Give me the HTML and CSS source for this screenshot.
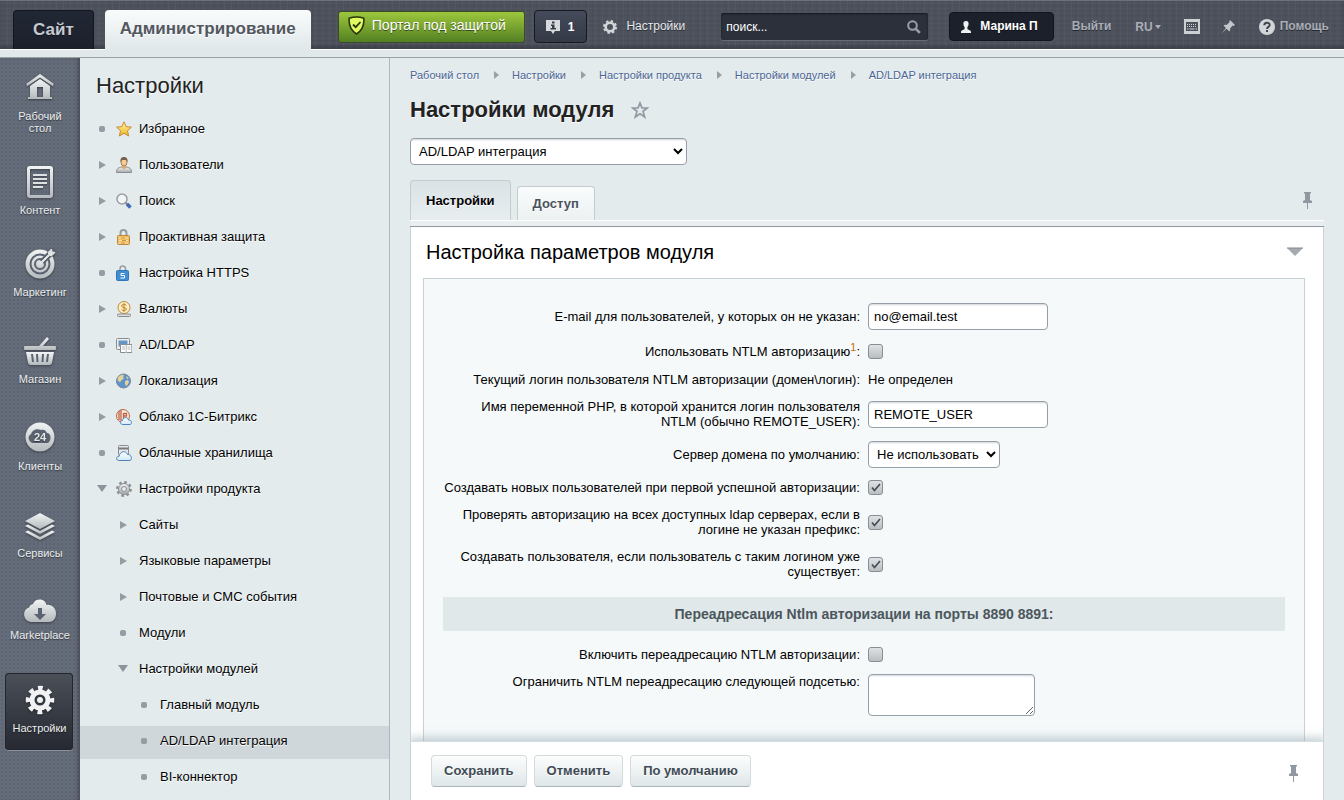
FILE: index.html
```
<!DOCTYPE html>
<html lang="ru">
<head>
    <meta charset="utf-8">
    <title>Настройки модуля</title>
    <link rel="stylesheet" href="styles.css">
</head>
<body>
    <!-- общие градиенты для иконок -->
    <svg class="defs" width="0" height="0" aria-hidden="true">
        <defs>
            <linearGradient id="metal" x1="0" y1="0" x2="0" y2="1">
                <stop offset="0" stop-color="#f1f4f4"/><stop offset="1" stop-color="#b4babd"/>
            </linearGradient>
            <linearGradient id="gold" x1="0" y1="0" x2="0" y2="1">
                <stop offset="0" stop-color="#fff3a0"/><stop offset="1" stop-color="#f0b820"/>
            </linearGradient>
            <linearGradient id="gray" x1="0" y1="0" x2="0" y2="1">
                <stop offset="0" stop-color="#f2f2f2"/><stop offset="1" stop-color="#a5a8aa"/>
            </linearGradient>
            <linearGradient id="sky" x1="0" y1="0" x2="0" y2="1">
                <stop offset="0" stop-color="#ffffff"/><stop offset="1" stop-color="#d3e8f8"/>
            </linearGradient>
        </defs>
    </svg>

    <header class="header">
        <nav class="header-tabs">
            <a href="#" class="header-tab header-tab-site">Сайт</a>
            <a href="#" class="header-tab header-tab-admin">Администрирование</a>
        </nav>
        <a href="#" class="protect">
            <svg width="17" height="19" viewBox="0 0 17 19"><path d="M8.500 1C6 1 3.500 1.400 1.200 2.200C.6 9 2.800 14.500 8.500 18C14.200 14.500 16.400 9 15.800 2.200C13.500 1.400 11 1 8.500 1Z" fill="#e2fa62" stroke="#27370c" stroke-width="1.600"/><path d="M5 8.500l2.700 2.700L12.500 6" fill="none" stroke="#27370c" stroke-width="1.800"/></svg>
            Портал под защитой
        </a>
        <button type="button" class="notify">
            <svg width="14" height="15" viewBox="0 0 14 15"><path d="M0 1h14v11H9l-2 3-2-3H0z" fill="#d6dadd"/><path d="M6 2.500h2.500v2H6zM5 5.500h3.500V9H10v1.500H4.500V9H6V7H5z" fill="#363c4a"/></svg>
            1
        </button>
        <a href="#" class="header-settings">
            <svg width="14" height="14" viewBox="0 0 14 14"><circle cx="7" cy="7" r="4.300" fill="none" stroke="#d3d6d9" stroke-width="2.600"/><circle cx="7" cy="7" r="6" fill="none" stroke="#d3d6d9" stroke-width="2" stroke-dasharray="2.400 2.310"/></svg>
            Настройки
        </a>
        <form class="search">
            <input type="text" class="search-input" value="поиск..." aria-label="Поиск">
            <button type="button" class="search-button" aria-label="Найти">
                <svg width="14" height="14" viewBox="0 0 14 14"><circle cx="5.500" cy="5.500" r="4.300" fill="none" stroke="#9a9fa7" stroke-width="2"/><path d="M8.800 8.800l4 4" stroke="#9a9fa7" stroke-width="2.600"/></svg>
            </button>
        </form>
        <div class="header-right">
            <a href="#" class="user">
                <svg width="10" height="12" viewBox="0 0 10 12"><path d="M5 0C3 0 2.300 1.200 2.400 3c.1 1.500.7 2.500 1.200 3v1.700c-.2.900-.8 1-1.800 1.300C.3 9.500 0 10 0 12h10c0-2-.3-2.500-1.800-3-1-.3-1.600-.4-1.800-1.300V6c.5-.5 1.100-1.500 1.200-3C7.700 1.200 7 0 5 0z" fill="#eef1f2"/></svg>
                Марина П
            </a>
            <a href="#" class="header-link">Выйти</a>
            <button type="button" class="lang">RU <span class="lang-arrow"></span></button>
            <button type="button" class="icon-button" aria-label="Клавиатура">
                <svg width="16" height="15" viewBox="0 0 16 15"><path fill-rule="evenodd" d="M0 0h16v15H0zM2 3v9h12V3z" fill="#cdd1d4"/><path d="M3 5.500h10M3 7.500h10" stroke="#cdd1d4" stroke-dasharray="1 1"/><path d="M3 10h1.500M5.500 10h5M11.500 10H13" stroke="#cdd1d4"/></svg>
            </button>
            <button type="button" class="icon-button" aria-label="Закрепить">
                <svg width="14" height="14" viewBox="0 0 14 14"><path d="M9 0l5 5-1.500.9-.8-.3-2.700 2.900c.3 1.200.1 2.200-.6 3L5.500 8.700.3 13.800 5 8 2.500 5.500c.8-.7 2-.9 3.100-.5L8.500 2.300 8.200 1.400z" fill="#c3c7cb"/></svg>
            </button>
            <a href="#" class="header-link help">
                <svg width="16" height="16" viewBox="0 0 16 16"><circle cx="8" cy="8" r="8" fill="#d3d6d9"/><path d="M5.300 6.200C5.300 2.800 10.700 2.900 10.700 6C10.700 7.800 8 8 8 10" fill="none" stroke="#424752" stroke-width="2"/><path d="M7 11h2v2H7z" fill="#424752"/></svg>
                Помощь
            </a>
        </div>
    </header>
    <div class="header-strip"></div>

    <div class="page">
        <nav class="rail">
            <a href="#" class="rail-item">
                <svg width="32" height="32" viewBox="0 0 32 32"><g fill="url(#metal)"><path d="M16 2L2 12l1.500 2L16 5.500 28.500 14l1.500-2z"/><path fill-rule="evenodd" d="M16 7L6 14v11H4v2h24v-2h-2V14zM13 15h6v10h-6z"/></g></svg>
                Рабочий стол
            </a>
            <a href="#" class="rail-item">
                <svg width="32" height="32" viewBox="0 0 32 32"><path fill="url(#metal)" fill-rule="evenodd" d="M6 0h20a3 3 0 0 1 3 3v26a3 3 0 0 1-3 3H6a3 3 0 0 1-3-3V3a3 3 0 0 1 3-3zM6 3v26h20V3z"/><path d="M9 9h14M9 13h14M9 17h14M9 21h10" stroke="#dde1e2" stroke-width="2"/></svg>
                Контент
            </a>
            <a href="#" class="rail-item">
                <svg width="32" height="32" viewBox="0 0 32 32"><circle cx="16" cy="16" r="14.500" fill="url(#metal)"/><g fill="none" stroke="#5c6370" stroke-width="2"><circle cx="16" cy="16" r="9.500"/><circle cx="16" cy="16" r="5"/></g><path d="M18 14L30 2" stroke="#5c6370" stroke-width="6"/><path d="M15 16l9.500-9.500V4l3-3 .5 3 3 .5-3 3h-2.500L16 17z" fill="#dfe3e4" stroke="#dfe3e4"/></svg>
                Маркетинг
            </a>
            <a href="#" class="rail-item rail-spaced">
                <svg width="32" height="32" viewBox="0 0 32 32"><path d="M15 11l8-9 2 2-6 7h12a1 1 0 0 1 1 1v2a1 1 0 0 1-1 1H1a1 1 0 0 1-1-1v-2a1 1 0 0 1 1-1z" fill="url(#metal)"/><path d="M2 17h28l-2 11a3 3 0 0 1-3 2H7a3 3 0 0 1-3-2z" fill="url(#metal)"/><path d="M8 19l1 8M13 19l.5 8M19 19l-.5 8M24 19l-1 8" stroke="#5c6370" stroke-width="2"/></svg>
                Магазин
            </a>
            <a href="#" class="rail-item rail-spaced">
                <svg width="32" height="32" viewBox="0 0 32 32"><circle cx="16" cy="15" r="14.500" fill="url(#metal)"/><path d="M8 21a5 5 0 0 1-1-9c1-4 6-6 10-4 2-1 5 0 6 3 4 0 5 7 1 10z" fill="#5c6370"/><text x="16" y="19" class="rail-24" text-anchor="middle">24</text></svg>
                Клиенты
            </a>
            <a href="#" class="rail-item rail-spaced">
                <svg width="32" height="32" viewBox="0 0 32 32"><g fill="url(#metal)"><path d="M16 4l15 8-15 8L1 12z"/><path d="M1 17l3-1.500 12 6.500 12-6.500 3 1.500-15 8z"/><path d="M1 23l3-1.500 12 6.500 12-6.500 3 1.500-15 8z"/></g></svg>
                Сервисы
            </a>
            <a href="#" class="rail-item">
                <svg width="32" height="32" viewBox="0 0 32 32"><path d="M7 31a7.500 7.500 0 0 1-2-14.500A5 5 0 0 1 9 13c2-6 12-6 13.500 1 5-1 9.500 3 9.500 8.500S29 31 25 31z" fill="url(#metal)"/><path d="M14 17h4v6h4l-6 6-6-6h4z" fill="#5c6370"/></svg>
                Marketplace
            </a>
            <a href="#" class="rail-item rail-active">
                <svg width="32" height="32" viewBox="0 0 32 32"><circle cx="16" cy="16" r="8" fill="none" stroke="#f0f2f3" stroke-width="5"/><circle cx="16" cy="16" r="12" fill="none" stroke="#f0f2f3" stroke-width="4.500" stroke-dasharray="4.800 4.625" stroke-dashoffset="2.400"/><circle cx="16" cy="16" r="3" fill="#f0f2f3"/></svg>
                Настройки
            </a>
        </nav>

        <aside class="menu">
            <h2 class="menu-title">Настройки</h2>
            <ul class="menu-list">
                <li><a href="#" class="menu-row"><i class="mark dot"></i>
                    <svg width="16" height="16" viewBox="0 0 16 16"><path d="M8 .8l2.200 4.800 5.200.6-3.900 3.500 1.100 5.300L8 12.300 3.400 15l1.100-5.300L.6 6.200l5.200-.6z" fill="url(#gold)" stroke="#c58a3c"/></svg>Избранное</a></li>
                <li><a href="#" class="menu-row"><i class="mark right"></i>
                    <svg width="16" height="16" viewBox="0 0 16 16"><path d="M.5 15.500c0-4 2-5 5.500-5.500h4c3.500.5 5.500 1.500 5.500 5.500z" fill="url(#gray)" stroke="#8a8d90"/><path d="M6 8h4v3l-2 1.500L6 11z" fill="#e0ad70"/><ellipse cx="8" cy="5" rx="3" ry="4" fill="#f4ce98" stroke="#a77b4e"/><path d="M4.500 5C4 1 6 0 8 0s4 1 3.500 5L10 3H6z" fill="#77614c"/></svg>Пользователи</a></li>
                <li><a href="#" class="menu-row"><i class="mark right"></i>
                    <svg width="16" height="16" viewBox="0 0 16 16"><path d="M9.500 9.500l2 2" stroke="#888" stroke-width="2"/><path d="M11 11l3.500 3.500" stroke="#3f6db5" stroke-width="3.500"/><circle cx="6" cy="6" r="5" fill="#f3f6f8" stroke="#999da1" stroke-width="1.500"/></svg>Поиск</a></li>
                <li><a href="#" class="menu-row"><i class="mark right"></i>
                    <svg width="16" height="16" viewBox="0 0 16 16"><path d="M4.500 7V4c0-4 6-4 6 0v3" fill="none" stroke="#999da1" stroke-width="2"/><rect x="1.500" y="6.500" width="12" height="9" rx="1" fill="#f1be60" stroke="#bd8841"/><path d="M3 9h9M3 11.500h9M3 14h9" stroke="#fbe2a8"/><path d="M5 9h4M6 11.500h4M5 14h4" stroke="#c8954c"/></svg>Проактивная защита</a></li>
                <li><a href="#" class="menu-row"><i class="mark dot"></i>
                    <svg width="16" height="16" viewBox="0 0 16 16"><path d="M4 6V4c0-4 5.500-4 5.500 0v2" fill="none" stroke="#999da1" stroke-width="1.500"/><rect x=".5" y="5.500" width="12" height="10" rx="1" fill="#3f8ed4" stroke="#3277b5"/><path d="M8.500 8.500H5v2h3.500v2.500H4.500" fill="none" stroke="#fff"/></svg>Настройка HTTPS</a></li>
                <li><a href="#" class="menu-row"><i class="mark right"></i>
                    <svg width="16" height="16" viewBox="0 0 16 16"><circle cx="8" cy="6.500" r="6" fill="#fff0c4" stroke="#bd8841"/><path d="M10.500 4.500C9.500 3 5.500 3 5.500 5s5 1.200 5 3-4 2-5 .5M8 2v9" fill="none" stroke="#c08128"/><rect x="1.500" y="13" width="13" height="2.500" rx="1" fill="#ddd" stroke="#8a8d90"/></svg>Валюты</a></li>
                <li><a href="#" class="menu-row"><i class="mark dot"></i>
                    <svg width="16" height="16" viewBox="0 0 16 16"><rect x=".5" y="1.500" width="13" height="11" rx="1" fill="#eee" stroke="#8a8d90"/><path d="M2.500 3.500h9v6h-9z" fill="#6796c4"/><path d="M4.500 7.500h5l.7.700.7-.7h5v8h-5l-.7.500-.7-.5h-5z" fill="#fff" stroke="#8a8d90"/><path d="M10.200 8v7M6 10h3M6 12h3M11.500 10h3M11.500 12h3" stroke="#b6b9bc"/></svg>AD/LDAP</a></li>
                <li><a href="#" class="menu-row"><i class="mark right"></i>
                    <svg width="16" height="16" viewBox="0 0 16 16"><circle cx="7.500" cy="8" r="7" fill="#5d94cf" stroke="#7c8794"/><path d="M2 4l4-2.500 2 1-1 2 1 1-3 2-1 2-2.500-2.500zM9 8l3-1 1 2-1.500 3L10 13 9 11zM10 3l3 2-2 1z" fill="#e3d396"/></svg>Локализация</a></li>
                <li><a href="#" class="menu-row"><i class="mark right"></i>
                    <svg width="16" height="16" viewBox="0 0 16 16"><circle cx="7" cy="7" r="6.500" fill="#f8e9e2" stroke="#b96645"/><path d="M3 2v9M5 1v11M7.500 4v6M7.500 4.500h3v2.500h-3" fill="none" stroke="#c06443" stroke-width="1.300"/><path d="M6.500 15.500C3.500 15 4 11.500 6.500 11.500 7 8 11.500 7.500 12.500 11 16 10.500 16.500 15 14 15.500z" fill="url(#sky)" stroke="#4b84b8"/></svg>Облако 1С-Битрикс</a></li>
                <li><a href="#" class="menu-row"><i class="mark dot"></i>
                    <svg width="16" height="16" viewBox="0 0 16 16"><rect x="2.500" y=".5" width="10" height="10" rx="1" fill="#e6e8e9" stroke="#8a8d90"/><path d="M3 3.500h9" stroke="#777b7f" stroke-width="2"/><path d="M2.500 15.500C-.5 15 .3 11 3 11.500 4 6 10 5 11.500 9.500c4-.5 5 5 2.500 6z" fill="url(#sky)" stroke="#4b84b8"/></svg>Облачные хранилища</a></li>
                <li><a href="#" class="menu-row"><i class="mark down"></i>
                    <svg width="16" height="16" viewBox="0 0 16 16"><circle cx="8" cy="8" r="6.800" fill="none" stroke="#8a8d90" stroke-width="2.200" stroke-dasharray="2.700 2.640"/><circle cx="8" cy="8" r="5.500" fill="url(#gray)" stroke="#8a8d90"/><circle cx="8" cy="8" r="2.500" fill="#e4ecee" stroke="#8a8d90"/></svg>Настройки продукта</a></li>
                <li><a href="#" class="menu-row level-2"><i class="mark right"></i>Сайты</a></li>
                <li><a href="#" class="menu-row level-2"><i class="mark right"></i>Языковые параметры</a></li>
                <li><a href="#" class="menu-row level-2"><i class="mark right"></i>Почтовые и СМС события</a></li>
                <li><a href="#" class="menu-row level-2"><i class="mark dot"></i>Модули</a></li>
                <li><a href="#" class="menu-row level-2"><i class="mark down"></i>Настройки модулей</a></li>
                <li><a href="#" class="menu-row level-3"><i class="mark dot"></i>Главный модуль</a></li>
                <li><a href="#" class="menu-row level-3 menu-current"><i class="mark dot"></i>AD/LDAP интеграция</a></li>
                <li><a href="#" class="menu-row level-3"><i class="mark dot"></i>BI-коннектор</a></li>
            </ul>
        </aside>

        <main class="content">
            <nav class="crumbs">
                <a href="#">Рабочий стол</a><i class="crumb-arrow"></i>
                <a href="#">Настройки</a><i class="crumb-arrow"></i>
                <a href="#">Настройки продукта</a><i class="crumb-arrow"></i>
                <a href="#">Настройки модулей</a><i class="crumb-arrow"></i>
                <a href="#">AD/LDAP интеграция</a>
            </nav>
            <div class="title-row">
                <h1 class="title">Настройки модуля</h1>
                <button type="button" class="icon-button title-star" aria-label="В избранное">
                    <svg width="18" height="18" viewBox="0 0 18 18"><path d="M9 2l2 5h5.200l-4.200 3.400 1.700 5.600L9 12.700 4.300 16 6 10.400 1.800 7H7z" fill="none" stroke="#9298a0" stroke-width="1.700"/></svg>
                </button>
            </div>
            <select class="field module-select" aria-label="Модуль">
                <option>AD/LDAP интеграция</option>
            </select>

            <div class="tabs">
                <button type="button" class="tab tab-active">Настройки</button>
                <button type="button" class="tab">Доступ</button>
                <button type="button" class="icon-button tabs-pin" aria-label="Закрепить вкладки">
                    <svg width="10" height="17" viewBox="0 0 10 17"><path d="M1 0h7v1.500H7V8l2 1v2H0V9l2-1V1.500H1z" fill="#9298a0"/><path d="M4.500 11v6" stroke="#9298a0"/></svg>
                </button>
            </div>
            <div class="tabs-bar"></div>

            <section class="panel">
                <div class="panel-head">
                    <h2 class="panel-title">Настройка параметров модуля</h2>
                    <button type="button" class="icon-button" aria-label="Свернуть">
                        <svg width="18" height="10" viewBox="0 0 18 10"><path d="M1 1h16L9 9z" fill="#a5aab1"/><path d="M1 1h16" stroke="#858a91"/></svg>
                    </button>
                </div>
                <div class="panel-body">
                    <table class="form-table">
                        <tr>
                            <td class="label"><label for="email">E-mail для пользователей, у которых он не указан:</label></td>
                            <td><input type="text" id="email" class="field text-field" value="no@email.test"></td>
                        </tr>
                        <tr class="row-note">
                            <td class="label"><label for="ntlm">Использовать NTLM авторизацию<sup>1</sup>:</label></td>
                            <td><input type="checkbox" id="ntlm" class="check"></td>
                        </tr>
                        <tr>
                            <td class="label">Текущий логин пользователя NTLM авторизации (домен\логин):</td>
                            <td>Не определен</td>
                        </tr>
                        <tr>
                            <td class="label"><label for="varname">Имя переменной PHP, в которой хранится логин пользователя NTLM (обычно REMOTE_USER):</label></td>
                            <td><input type="text" id="varname" class="field text-field" value="REMOTE_USER"></td>
                        </tr>
                        <tr>
                            <td class="label"><label for="server">Сервер домена по умолчанию:</label></td>
                            <td><select id="server" class="field server-select"><option>Не использовать</option></select></td>
                        </tr>
                        <tr>
                            <td class="label"><label for="create">Создавать новых пользователей при первой успешной авторизации:</label></td>
                            <td><input type="checkbox" id="create" class="check" checked></td>
                        </tr>
                        <tr>
                            <td class="label"><label for="verify">Проверять авторизацию на всех доступных ldap серверах, если в логине не указан префикс:</label></td>
                            <td><input type="checkbox" id="verify" class="check" checked></td>
                        </tr>
                        <tr>
                            <td class="label"><label for="exists">Создавать пользователя, если пользователь с таким логином уже существует:</label></td>
                            <td><input type="checkbox" id="exists" class="check" checked></td>
                        </tr>
                        <tr>
                            <td colspan="2" class="heading-cell"><div class="heading">Переадресация Ntlm авторизации на порты 8890 8891:</div></td>
                        </tr>
                        <tr>
                            <td class="label"><label for="redirect">Включить переадресацию NTLM авторизации:</label></td>
                            <td><input type="checkbox" id="redirect" class="check"></td>
                        </tr>
                        <tr class="row-top">
                            <td class="label"><label for="subnet">Ограничить NTLM переадресацию следующей подсетью:</label></td>
                            <td><textarea id="subnet" class="field area"></textarea></td>
                        </tr>
                    </table>
                </div>
                <div class="actions">
                    <button type="button" class="action">Сохранить</button>
                    <button type="button" class="action">Отменить</button>
                    <button type="button" class="action">По умолчанию</button>
                    <button type="button" class="icon-button actions-pin" aria-label="Закрепить панель">
                        <svg width="10" height="17" viewBox="0 0 10 17"><path d="M1 0h7v1.500H7V8l2 1v2H0V9l2-1V1.500H1z" fill="#9298a0"/><path d="M4.500 11v6" stroke="#9298a0"/></svg>
                    </button>
                </div>
            </section>
        </main>
    </div>
</body>
</html>
```
FILE: styles.css
```
* {
    box-sizing: border-box;
}

body {
    margin: 0;
    height: 100vh;
    display: flex;
    flex-direction: column;
    overflow: hidden;
    background: #e3ebed;
    color: #000;
    font-family: "Liberation Sans", Arial, sans-serif;
    font-size: 13px;
    line-height: 15px;
}

a {
    color: inherit;
    text-decoration: none;
}

button, input, select, textarea {
    font-family: inherit;
    font-size: 13px;
}

button {
    border: 0;
    padding: 0;
    background: none;
    cursor: pointer;
}

svg {
    display: block;
    flex: none;
}

.defs {
    position: absolute;
}

.icon-button {
    display: flex;
}

/* Верхняя панель */
.header {
    flex: none;
    z-index: 1;
    display: flex;
    align-items: center;
    height: 49px;
    padding: 3px 15px 0 13px;
    border-top: 1px solid #6b707a;
    box-shadow: inset 0 -3px 3px rgba(0,0,0,0.2);
    background:
        repeating-linear-gradient(90deg, rgba(255,255,255,0.03) 0 1px, transparent 1px 4px, rgba(0,0,0,0.03) 4px 5px, transparent 5px 7px),
        repeating-linear-gradient(0deg, rgba(255,255,255,0.02) 0 1px, transparent 1px 3px, rgba(0,0,0,0.03) 3px 4px, transparent 4px 5px),
        #4c515c;
    color: #e6e9ec;
    text-shadow: 0 1px 0 rgba(0,0,0,0.5);
}

.header-tabs {
    display: flex;
    align-self: flex-end;
    gap: 11px;
}

.header-tab {
    height: 39px;
    border-radius: 4px 4px 0 0;
    font-size: 17px;
    font-weight: bold;
    line-height: 38px;
}

.header-tab-site {
    padding: 0 19px;
    border: 1px solid #12151c;
    border-bottom: 0;
    background: linear-gradient(#222735, #1c202b);
    color: #c6cbd1;
}

/* заходит на светлую линию под шапкой */
.header-tab-admin {
    height: 40px;
    margin-bottom: -1px;
    padding: 0 15px;
    background: linear-gradient(#fafcfc, #e0e8ea);
    color: #53575f;
    text-shadow: 0 1px 0 #fff;
}

.protect {
    display: flex;
    align-items: center;
    gap: 7px;
    height: 32px;
    margin-left: 27px;
    padding: 0 18px 2px 9px;
    border: 1px solid #3c4a2a;
    border-radius: 3px;
    background: linear-gradient(#9dc73c, #538023);
    color: #fff;
    font-size: 14px;
}

.notify {
    display: flex;
    align-items: center;
    gap: 8px;
    height: 33px;
    margin-left: 9px;
    padding: 0 12px 0 11px;
    border: 1px solid #171a20;
    border-radius: 4px;
    background: linear-gradient(#454b5a, #343946);
    color: #fff;
    font-size: 12px;
    font-weight: bold;
}

.header-settings {
    display: flex;
    align-items: center;
    gap: 9px;
    margin-left: 16px;
    font-size: 12px;
}

.search {
    display: flex;
    align-items: center;
    width: 207px;
    height: 27px;
    margin-left: 36px;
    padding: 0 7px 0 5px;
    border-radius: 2px;
    background: #2c303a;
    box-shadow: inset 0 1px 2px #16181e, 0 1px 0 #666b75;
}

.search-input {
    flex: 1;
    min-width: 0;
    padding: 0;
    border: 0;
    outline: 0;
    background: none;
    color: #fff;
    font-size: 12px;
}

.header-right {
    display: flex;
    align-items: center;
    margin-left: auto;
    font-size: 12px;
    font-weight: bold;
}

.user {
    display: flex;
    align-items: center;
    gap: 9px;
    height: 29px;
    margin-right: 18px;
    padding: 0 15px 0 11px;
    border: 1px solid #12151b;
    border-radius: 4px;
    background: #1c202b;
    color: #fff;
}

.header-link, .lang {
    color: #a9aeb7;
    font-size: 12px;
    font-weight: bold;
}

.lang {
    display: flex;
    align-items: center;
    gap: 2px;
    margin: 0 23px 0 24px;
}

.lang-arrow {
    border: 3px solid transparent;
    border-top: 4px solid #a9aeb7;
    border-bottom: 0;
}

.header-right .icon-button {
    margin-right: 21px;
}

.help {
    display: flex;
    align-items: center;
    gap: 5px;
    margin-left: 3px;
}

.header-strip {
    flex: none;
    height: 9px;
    border-top: 1px solid #fff;
    border-bottom: 1px solid #98a2a4;
    background: #e0e8ea;
}

.page {
    flex: 1;
    display: flex;
    min-height: 0;
}

/* Левая колонка с разделами */
.rail {
    flex: none;
    width: 80px;
    padding: 1px 7px 0 5px;
    background:
        radial-gradient(circle, #5c6371 1px, transparent 1px) 0 0 / 4px 4px,
        #656c79;
    box-shadow: inset -4px 0 4px -2px rgba(0,0,0,0.3);
}

.rail-item {
    display: flex;
    flex-direction: column;
    align-items: center;
    gap: 6px;
    margin-bottom: 3px;
    padding: 13px 3px 16px 5px;
    border-radius: 4px;
    color: #eceff0;
    font-size: 11px;
    line-height: 12px;
    text-align: center;
    text-shadow: 0 1px 1px rgba(0,0,0,0.5);
}

.rail-item svg {
    filter: drop-shadow(0 1px 1px rgba(0,0,0,0.4));
}

.rail-24 {
    fill: #e3e7e8;
    font-size: 11px;
    font-weight: bold;
}

.rail-spaced {
    margin-top: 8px;
}

.rail-active {
    margin-top: 16px;
    padding: 11px 2px 16px 3px;
    background: linear-gradient(#4a4f58, #262932);
    box-shadow: inset 0 0 0 1px #23262e, 0 1px 0 #8b919b;
}

/* Дерево меню */
.menu {
    flex: none;
    width: 310px;
    border-right: 1px solid #a9bac4;
    text-shadow: 0 1px 0 #fff;
    overflow: hidden;
}

.menu-title {
    margin: 15px 0 16px 16px;
    color: #222;
    font-size: 22px;
    font-weight: normal;
    line-height: 25px;
}

.menu-list {
    margin: 0;
    padding: 0;
    list-style: none;
}

.menu-row {
    display: flex;
    align-items: center;
    gap: 7px;
    height: 33px;
    margin-bottom: 3px;
    padding: 0 0 4px 17px;
}

.menu-row svg {
    margin-left: 2px;
}

.level-2 {
    padding-left: 38px;
    gap: 11px;
}

.level-3 {
    padding-left: 59px;
    gap: 11px;
}

.menu-current {
    background: #cfd7da;
}

.mark {
    flex: none;
    display: flex;
    align-items: center;
    justify-content: center;
    width: 10px;
    height: 10px;
}

.mark::before {
    content: "";
}

.dot::before {
    width: 6px;
    height: 6px;
    border-radius: 2px;
    background: #959ca3;
}

.right::before {
    border: 4px solid transparent;
    border-left: 7px solid #959ca3;
    border-right: 0;
}

.down::before {
    border: 5px solid transparent;
    border-top: 7px solid #8d949c;
    border-bottom: 0;
}

/* Рабочая область */
.content {
    flex: 1;
    display: flex;
    flex-direction: column;
    min-width: 0;
    padding: 9px 20px 0;
}

.crumbs {
    display: flex;
    align-items: center;
    color: #4a6594;
    font-size: 11px;
    line-height: 16px;
    text-shadow: 0 1px 0 #fff;
}

.crumb-arrow {
    margin: 0 13px 0 15px;
    border: 4px solid transparent;
    border-left: 5px solid #989fa5;
    border-right: 0;
}

.title-row {
    display: flex;
    align-items: center;
    gap: 17px;
    margin: 13px 0 14px;
}

.title {
    margin: 0;
    color: #222;
    font-size: 22px;
    line-height: 28px;
    text-shadow: 0 1px 0 #fff;
}

.field {
    display: block;
    height: 27px;
    border: 1px solid #959ea9;
    border-radius: 4px;
    background-color: #fff;
    color: #000;
    box-shadow: inset 0 2px 2px -1px rgba(140,150,160,0.4);
    outline: 0;
}

select.field {
    padding-left: 4px;
}

.module-select {
    width: 277px;
}

.server-select {
    width: 132px;
}

.tabs {
    flex: none;
    display: flex;
    align-items: flex-end;
    gap: 6px;
    height: 40px;
    margin-top: 15px;
}

.tab {
    height: 34px;
    padding: 0 15px;
    border: 1px solid #c3cccf;
    border-bottom: 0;
    border-radius: 4px 4px 0 0;
    background: linear-gradient(#fafcfc, #ecf1f2);
    color: #4c535c;
    font-weight: bold;
    text-shadow: 0 1px 0 #fff;
}

.tab-active {
    height: 40px;
    background: linear-gradient(#dae2e5, #e8eef0);
    color: #000;
}

.tabs-pin {
    margin: 0 11px 11px auto;
}

.tabs-bar {
    flex: none;
    height: 7px;
    border-top: 1px solid #fff;
    border-bottom: 1px solid #8f989f;
    background: #e9eff0;
}

.panel {
    flex: 1;
    display: flex;
    flex-direction: column;
    min-height: 0;
    border: 1px solid #c9d3d6;
    border-width: 0 1px;
    background: #fff;
    overflow: hidden;
}

.panel-head {
    flex: none;
    display: flex;
    align-items: center;
    justify-content: space-between;
    height: 51px;
    padding: 0 19px 2px 15px;
}

.panel-title {
    margin: 0;
    font-size: 20px;
    font-weight: normal;
    line-height: 24px;
}

.panel-body {
    flex: 1;
    min-height: 0;
    margin: 0 18px 0 12px;
    padding: 19px;
    border: 1px solid #c6d2d5;
    border-bottom: 0;
    background: #f5f9fa;
    overflow: hidden;
}

.form-table {
    width: 100%;
    table-layout: fixed;
    border-collapse: collapse;
}

.form-table td {
    padding: 5px 0 7px 4px;
    vertical-align: middle;
}

.form-table .label {
    width: 50%;
    padding: 5px 4px 7px 0;
    text-align: right;
}

.form-table .heading-cell {
    padding: 11px 0;
}

.row-note {
    height: 30px;
}

.form-table .row-top .label {
    vertical-align: top;
}

sup {
    color: #d06f00;
    font-size: 11px;
    line-height: 0;
}

.heading {
    background: #e0e8ea;
    color: #4b575c;
    font-size: 14px;
    font-weight: bold;
    line-height: 34px;
    text-align: center;
}

.text-field {
    width: 180px;
    padding: 0 5px;
}

.area {
    width: 167px;
    height: 42px;
}

.check {
    appearance: none;
    display: block;
    width: 15px;
    height: 15px;
    margin: 0;
    border: 1px solid #878e95;
    border-radius: 3px;
    background: linear-gradient(#dfe2e4, #b9bec1);
}

.check:checked {
    background:
        url("data:image/svg+xml,%3Csvg xmlns='http://www.w3.org/2000/svg' viewBox='0 0 13 13'%3E%3Cpath d='M3 6.500l2.500 3L11 3' fill='none' stroke='%23434b55' stroke-width='1.700'/%3E%3C/svg%3E"),
        linear-gradient(#dfe2e4, #b9bec1);
}

.actions {
    flex: none;
    display: flex;
    align-items: center;
    gap: 7px;
    height: 59px;
    padding: 0 24px 0 20px;
    border-top: 1px solid #d5dfe2;
    background: #fff;
    box-shadow: 0 -2px 8px 2px rgba(150,170,178,0.5);
    z-index: 1;
}

.action {
    height: 32px;
    padding: 0 12px 2px;
    border: 1px solid #d3dbdd;
    border-bottom-color: #adb5b8;
    border-radius: 4px;
    background: linear-gradient(#fcfdfd, #dfe7e9);
    color: #3f4b54;
    font-weight: bold;
    text-shadow: 0 1px 0 #fff;
}

.actions-pin {
    margin: 4px 0 0 auto;
}
```
